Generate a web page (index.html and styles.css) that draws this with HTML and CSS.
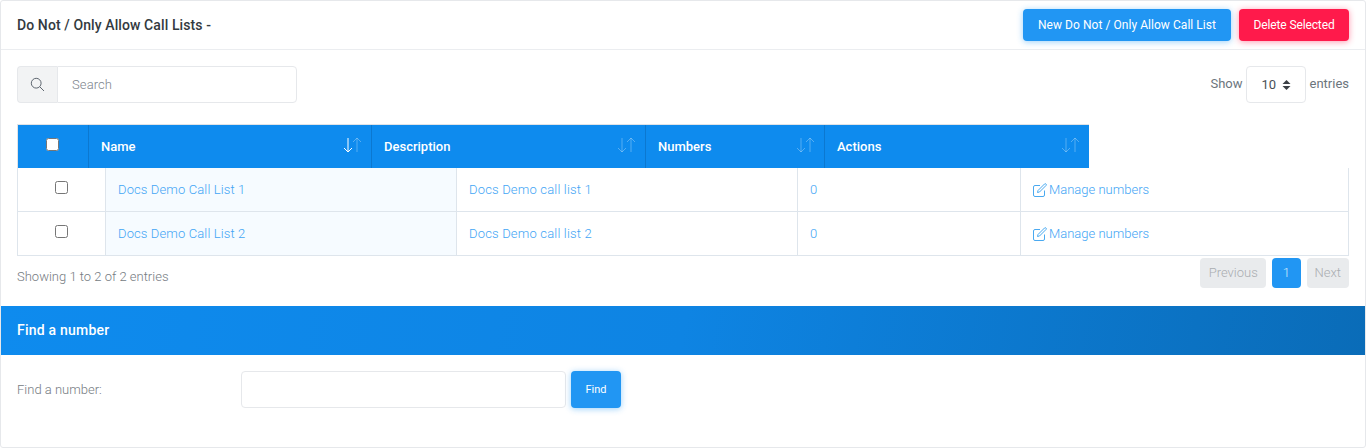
FILE: index.html
```html
<html>
    <head>
        <title>Do Not / Only Allow Call Lists</title>
        <link rel="stylesheet" href="styles.css">
    </head>
    <body>
        <div class="card">
            <div class="card-header">
                <h5 class="title">Do Not / Only Allow Call Lists -</h5>
                <div class="actions">
                    <button class="btn btn-blue">New Do Not / Only Allow Call List</button>
                    <button class="btn btn-red">Delete Selected</button>
                </div>
            </div>
            <div class="card-body">
                <div class="toolbar">
                    <div class="search">
                        <span class="search-icon">
                            <svg width="15" height="15" viewBox="0 0 15 15" fill="none" stroke="#5f6770" stroke-width="1">
                                <circle cx="6.2" cy="6.2" r="4.9"/>
                                <path d="M9.8 9.8 L14 14"/>
                            </svg>
                        </span>
                        <input class="search-input" placeholder="Search">
                    </div>
                    <div class="length">
                        <span>Show</span>
                        <span class="length-select">
                            10
                            <svg width="9" height="12" viewBox="0 0 9 12" fill="#3a3f45">
                                <path d="M4.5 1 L8.5 5 H0.5 Z"/>
                                <path d="M4.5 11 L8.5 7 H0.5 Z"/>
                            </svg>
                        </span>
                        <span>entries</span>
                    </div>
                </div>

                <div class="thead">
                    <div class="th th-check"><input type="checkbox"></div>
                    <div class="th th-name">Name
                        <svg class="sort" width="19" height="16" viewBox="0 0 19 16" fill="none" stroke-width="1">
                            <path class="on" d="M5 1 V15 M1 11 L5 15 L9 11"/>
                            <path class="off" d="M14 15 V1 M10 5 L14 1 L18 5"/>
                        </svg>
                    </div>
                    <div class="th th-desc">Description
                        <svg class="sort" width="19" height="16" viewBox="0 0 19 16" fill="none" stroke-width="1">
                            <path class="off" d="M5 1 V15 M1 11 L5 15 L9 11"/>
                            <path class="off" d="M14 15 V1 M10 5 L14 1 L18 5"/>
                        </svg>
                    </div>
                    <div class="th th-num">Numbers
                        <svg class="sort" width="19" height="16" viewBox="0 0 19 16" fill="none" stroke-width="1">
                            <path class="off" d="M5 1 V15 M1 11 L5 15 L9 11"/>
                            <path class="off" d="M14 15 V1 M10 5 L14 1 L18 5"/>
                        </svg>
                    </div>
                    <div class="th th-act">Actions
                        <svg class="sort" width="19" height="16" viewBox="0 0 19 16" fill="none" stroke-width="1">
                            <path class="off" d="M5 1 V15 M1 11 L5 15 L9 11"/>
                            <path class="off" d="M14 15 V1 M10 5 L14 1 L18 5"/>
                        </svg>
                    </div>
                </div>

                <div class="tbody">
                    <div class="row">
                        <div class="td td-check"><input type="checkbox"></div>
                        <div class="td td-name"><a>Docs Demo Call List 1</a></div>
                        <div class="td td-desc"><a>Docs Demo call list 1</a></div>
                        <div class="td td-num"><a>0</a></div>
                        <div class="td td-act">
                            <a class="manage">
                                <svg width="14" height="14" viewBox="0 0 14 14" fill="none" stroke="#4aa9f0" stroke-width="1">
                                    <path d="M7 2.5 H2 a1.5 1.5 0 0 0 -1.5 1.5 V12 a1.5 1.5 0 0 0 1.5 1.5 H10 a1.5 1.5 0 0 0 1.5 -1.5 V7.5"/>
                                    <path d="M5 7.5 L11.5 1 a1 1 0 0 1 1.5 1.5 L6.5 9 L4.5 9.5 Z"/>
                                </svg>
                                Manage numbers
                            </a>
                        </div>
                    </div>
                    <div class="row">
                        <div class="td td-check"><input type="checkbox"></div>
                        <div class="td td-name"><a>Docs Demo Call List 2</a></div>
                        <div class="td td-desc"><a>Docs Demo call list 2</a></div>
                        <div class="td td-num"><a>0</a></div>
                        <div class="td td-act">
                            <a class="manage">
                                <svg width="14" height="14" viewBox="0 0 14 14" fill="none" stroke="#4aa9f0" stroke-width="1">
                                    <path d="M7 2.5 H2 a1.5 1.5 0 0 0 -1.5 1.5 V12 a1.5 1.5 0 0 0 1.5 1.5 H10 a1.5 1.5 0 0 0 1.5 -1.5 V7.5"/>
                                    <path d="M5 7.5 L11.5 1 a1 1 0 0 1 1.5 1.5 L6.5 9 L4.5 9.5 Z"/>
                                </svg>
                                Manage numbers
                            </a>
                        </div>
                    </div>
                </div>

                <div class="table-foot">
                    <div class="info">Showing 1 to 2 of 2 entries</div>
                    <div class="pager">
                        <span class="page page-off">Previous</span>
                        <span class="page page-on">1</span>
                        <span class="page page-off">Next</span>
                    </div>
                </div>
            </div>

            <div class="band">Find a number</div>

            <div class="find">
                <label class="find-label">Find a number:</label>
                <input class="find-input">
                <button class="btn-find">Find</button>
            </div>
        </div>
    </body>
</html>
```

FILE: styles.css
```css
html,body{
    height: 100%;
}
body{
    margin: 0;
    background-color: white;
    font-family: Roboto, "Liberation Sans", sans-serif;
    font-size: 13px;
    color: #6c757d;
}
.card{
    box-sizing: border-box;
    height: 448px;
    border: 1px solid #e6e8eb;
    border-radius: 3px;
    background-color: white;
}
.card-header{
    display: flex;
    justify-content: space-between;
    align-items: center;
    box-sizing: border-box;
    height: 49px;
    padding: 0 16px;
    border-bottom: 1px solid #ebedf0;
}
.title{
    margin: 0;
    font-size: 14px;
    font-weight: 500;
    letter-spacing: .1px;
    color: #333a40;
}
.actions{
    display: flex;
    gap: 8px;
}
.btn{
    height: 32px;
    border: none;
    border-radius: 4px;
    color: white;
    font-family: Roboto, sans-serif;
    font-size: 12px;
    padding: 0 15px;
}
.btn-blue{
    width: 208px;
    padding: 0;
    letter-spacing: .05px;
    background-color: #2196f3;
    box-shadow: 0 1px 6px rgba(33,150,243,.45);
}
.btn-red{
    width: 110px;
    padding: 0;
    letter-spacing: -.12px;
    background-color: #ff1a4b;
    box-shadow: 0 1px 6px rgba(255,26,75,.45);
}
.card-body{
    box-sizing: border-box;
    height: 256px;
    padding: 16px 16px 0;
}
.toolbar{
    display: flex;
    justify-content: space-between;
    height: 37px;
    margin-bottom: 21px;
}
.search{
    display: flex;
    width: 280px;
}
.search-icon{
    display: flex;
    align-items: center;
    justify-content: center;
    box-sizing: border-box;
    width: 40px;
    border: 1px solid #e6e8eb;
    border-right: none;
    border-radius: 4px 0 0 4px;
    background-color: #f2f3f4;
}
.search-input{
    box-sizing: border-box;
    flex: 1;
    min-width: 0;
    padding: 0 14px;
    border: 1px solid #e6e8eb;
    border-radius: 0 4px 4px 0;
    font-family: Roboto, sans-serif;
    font-size: 13px;
    letter-spacing: .1px;
    outline: none;
}
.search-input::placeholder{
    color: #7d858d;
    font-weight: 300;
    opacity: 1;
}
.length{
    display: flex;
    align-items: center;
    gap: 3px;
    padding: 0 0 2px 0;
    color: #6c757d;
}
.length-select{
    display: flex;
    align-items: center;
    justify-content: space-between;
    box-sizing: border-box;
    width: 60px;
    height: 37px;
    margin-top: 2px;
    margin-right: 1px;
    padding: 0 14px 0 15px;
    border: 1px solid #e6e8eb;
    border-radius: 4px;
    color: #495057;
}
.thead{
    display: flex;
    box-sizing: border-box;
    width: 1072px;
    height: 44px;
    border-top: 1px solid #dfe3e7;
    border-left: 1px solid #dfe3e7;
    background-color: #0e8bee;
}
.th{
    display: flex;
    align-items: center;
    justify-content: space-between;
    box-sizing: border-box;
    padding: 0 9px 0 12px;
    border-right: 1px solid #0b78d0;
    color: white;
    font-weight: 500;
}
.th:last-child{
    border-right: none;
}
.th-check{
    justify-content: center;
    width: 71px;
    padding: 0 2px 4px 0;
}
.th-name{
    width: 283px;
}
.th-desc{
    width: 274px;
}
.th-num{
    width: 179px;
}
.th-act{
    width: 264px;
}
.th input{
    margin: 0;
    width: 13px;
    height: 13px;
}
.sort{
    margin-bottom: 3px;
}
.sort .on{
    stroke: white;
}
.sort .off{
    stroke: rgba(255,255,255,.3);
}
.tbody{
    box-sizing: border-box;
    width: 1332px;
    border: 1px solid #dee5ec;
    border-top: none;
}
.row{
    display: flex;
    box-sizing: border-box;
    height: 44px;
    border-bottom: 1px solid #dee5ec;
}
.row:last-child{
    border-bottom: none;
    height: 43px;
}
.td{
    display: flex;
    align-items: center;
    box-sizing: border-box;
    padding: 0 12px;
    border-right: 1px solid #dee5ec;
}
.td:last-child{
    border-right: none;
}
.td a{
    color: #42a5f5;
    font-weight: 300;
    letter-spacing: .12px;
}
.td-desc a{
    letter-spacing: .18px;
}
.td a.manage{
    letter-spacing: 0;
}
.td input{
    margin: 0 0 5px;
    width: 13px;
    height: 13px;
}
.td-check{
    justify-content: center;
    width: 88px;
    padding: 0;
}
.td-name{
    width: 351px;
    background-color: #f6fbff;
}
.td-desc{
    width: 341px;
}
.td-num{
    width: 223px;
}
.td-act{
    flex: 1;
}
.manage{
    display: flex;
    align-items: center;
    gap: 2px;
}
.table-foot{
    display: flex;
    justify-content: space-between;
    margin-top: 2px;
}
.info{
    padding-top: 11px;
    color: #757b82;
    font-weight: 300;
}
.pager{
    display: flex;
    gap: 6px;
}
.page{
    display: flex;
    align-items: center;
    box-sizing: border-box;
    height: 30px;
    padding: 0 8px 2px;
    border-radius: 4px;
    font-weight: 300;
}
.page-off{
    background-color: #e9ebed;
    color: #a9adb1;
}
.page-off:first-child{
    padding: 0 8.5px 2px;
}
.page-on{
    padding: 0 10.5px 2px;
    background-color: #2196f3;
    color: #d4e9fb;
}
.band{
    display: flex;
    align-items: center;
    box-sizing: border-box;
    height: 49px;
    padding: 0 16px 2px;
    background-image: linear-gradient(100deg,#0e8bee 0%,#0e84e3 50%,#0a6cb8 100%);
    color: white;
    font-size: 14px;
    font-weight: 500;
    letter-spacing: .22px;
}
.find{
    display: flex;
    align-items: center;
    padding: 16px 16px 0;
}
.find-label{
    width: 224px;
    color: #757b82;
    font-weight: 300;
}
.find-input{
    box-sizing: border-box;
    width: 325px;
    height: 37px;
    border: 1px solid #e6e8eb;
    border-radius: 4px;
    outline: none;
}
.btn-find{
    width: 50px;
    height: 37px;
    margin-left: 5px;
    border: none;
    border-radius: 4px;
    background-color: #2196f3;
    box-shadow: 0 1px 6px rgba(33,150,243,.45);
    color: white;
    font-family: Roboto, sans-serif;
    font-size: 11px;
}
```
